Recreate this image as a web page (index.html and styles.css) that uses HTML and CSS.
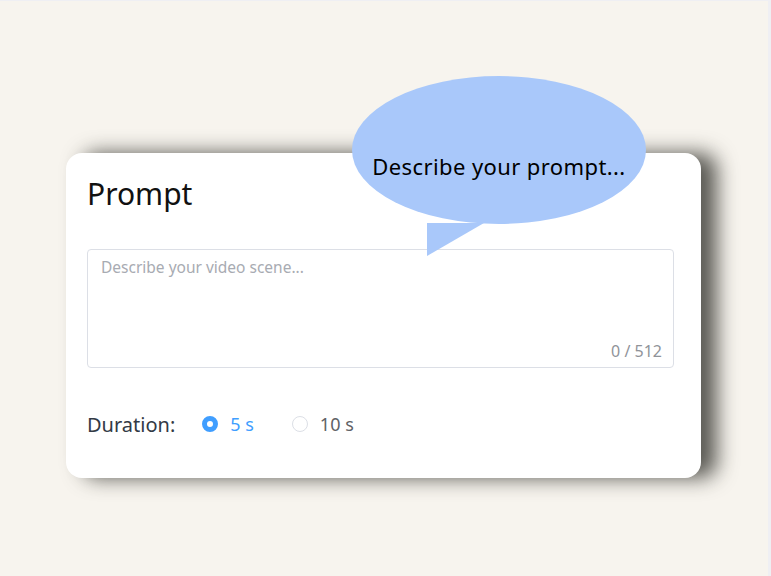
FILE: index.html
```html
<!DOCTYPE html>
<html lang="en">
<head>
    <meta charset="UTF-8">
    <title>Prompt</title>
    <link rel="stylesheet" href="styles.css">
</head>
<body>
    <main class="page">
        <section class="card">
            <h1 class="card-title">Prompt</h1>
            <div class="textarea-wrap">
                <div class="textarea">
                    <span class="placeholder">Describe your video scene...</span>
                </div>
                <span class="counter">0 / 512</span>
            </div>
            <div class="duration">
                <span class="duration-label">Duration:</span>
                <label class="radio checked">
                    <span class="radio-dot"></span>
                    <span class="radio-text">5 s</span>
                </label>
                <label class="radio">
                    <span class="radio-dot"></span>
                    <span class="radio-text">10 s</span>
                </label>
            </div>

            <div class="bubble">
                <span class="bubble-text">Describe your prompt...</span>
                <svg class="bubble-tail" width="58" height="34" viewBox="0 0 58 34">
                    <polygon points="0,0 57,0 0,33" fill="#a9c8fa"/>
                </svg>
            </div>
        </section>
    </main>
</body>
</html>
```

FILE: styles.css
```css
html {
    background: #efeff3;
}

body {
    margin: 0;
    height: 575px;
    font-family: 'Noto Sans', 'Open Sans', sans-serif;
    background: #f7f4ee;
    border-top: 1px solid #efeff3;
    margin-right: 3px;
}

.page {
    padding: 152px 0 0 66px;
}

.card {
    position: relative;
    width: 635px;
    height: 325px;
    box-sizing: border-box;
    padding: 18px 27px 0 21px;
    background: #fff;
    border-radius: 16px;
    box-shadow: 16px 0 20px rgba(30, 30, 25, 0.72);
}

.card-title {
    margin: 0;
    font-size: 30px;
    font-weight: 400;
    line-height: 46px;
    color: #111;
}

.textarea-wrap {
    position: relative;
    margin-top: 32px;
    height: 119px;
    border: 1px solid #dcdfe6;
    border-radius: 4px;
    box-sizing: border-box;
}

.textarea {
    padding: 5px 13px;
}

.placeholder {
    font-size: 15.5px;
    line-height: 24px;
    color: #a8abb2;
}

.counter {
    position: absolute;
    right: 11px;
    bottom: 5px;
    font-size: 16px;
    color: #909399;
}

.duration {
    display: flex;
    align-items: center;
    margin-top: 40px;
    height: 32px;
}

.duration-label {
    font-size: 20px;
    color: #333a45;
    margin-right: 27px;
}

.radio {
    display: flex;
    align-items: center;
    margin-right: 38px;
    font-size: 18px;
    color: #606266;
}

.radio-dot {
    width: 16px;
    height: 16px;
    box-sizing: border-box;
    border: 1px solid #dcdfe6;
    border-radius: 50%;
    margin-right: 12px;
    background: #fff;
}

.radio.checked {
    color: #409eff;
}

.radio.checked .radio-dot {
    border: 5px solid #409eff;
}

.bubble {
    position: absolute;
    left: 286px;
    top: -77px;
    width: 294px;
    height: 148px;
    display: flex;
    align-items: center;
    justify-content: center;
    background: #a9c8fa;
    border-radius: 50%;
}

.bubble-text {
    font-size: 22px;
    letter-spacing: 0.4px;
    color: #000;
    margin-top: 32px;
}

.bubble-tail {
    position: absolute;
    left: 75px;
    top: 147px;
}
```
